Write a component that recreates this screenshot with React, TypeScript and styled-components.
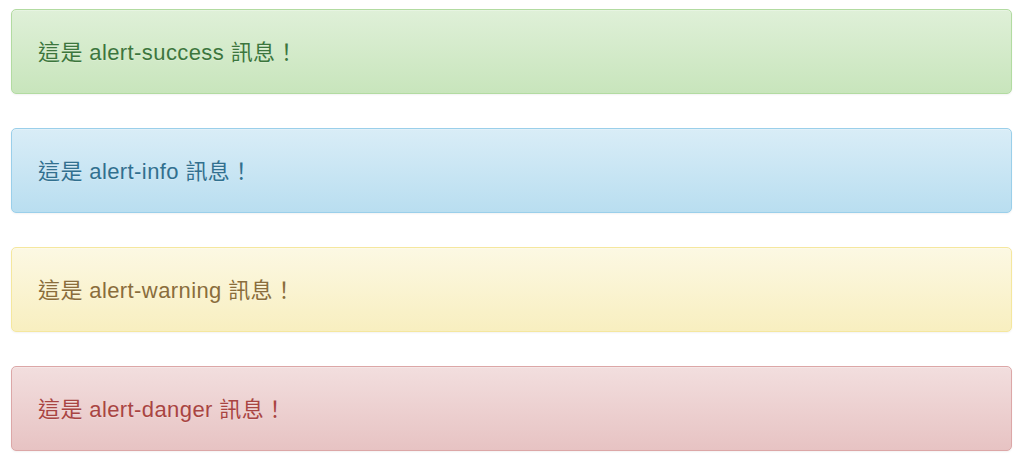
import styled, { createGlobalStyle } from 'styled-components'

const GlobalStyle = createGlobalStyle`
  body {
    margin: 0;
    background: #fff;
    font-family: "Liberation Sans", Arial, "Noto Sans CJK TC", sans-serif;
  }
`

type Kind = 'success' | 'info' | 'warning' | 'danger'

const palette: Record<Kind, { from: string; to: string; border: string; color: string }> = {
  success: { from: '#dff0d8', to: '#c8e5bc', border: '#b2dba1', color: '#3c763d' },
  info: { from: '#d9edf7', to: '#b9def0', border: '#9acfea', color: '#31708f' },
  warning: { from: '#fcf8e3', to: '#f8efc0', border: '#f5e79e', color: '#8a6d3b' },
  danger: { from: '#f2dede', to: '#e7c3c3', border: '#dca7a7', color: '#a94442' },
}

const Container = styled.div`
  display: flex;
  flex-direction: column;
  gap: 34px;
  padding: 9px 11px;
`

const Alert = styled.div<{ $kind: Kind }>`
  height: 85px;
  box-sizing: border-box;
  display: flex;
  align-items: center;
  padding: 0 26px 3px;
  border: 1px solid ${p => palette[p.$kind].border};
  border-radius: 5px;
  background-image: linear-gradient(to bottom, ${p => palette[p.$kind].from} 0%, ${p => palette[p.$kind].to} 100%);
  box-shadow: inset 0 1px 0 rgba(255, 255, 255, 0.25), 0 1px 2px rgba(0, 0, 0, 0.05);
  color: ${p => palette[p.$kind].color};
  text-shadow: 0 1px 0 rgba(255, 255, 255, 0.2);
  font-size: 22px;
  letter-spacing: 0.4px;
`

const kinds: Kind[] = ['success', 'info', 'warning', 'danger']

export default function App() {
  return (
    <>
      <GlobalStyle />
      <Container>
        {kinds.map(k => (
          <Alert key={k} $kind={k}>這是 alert-{k} 訊息！</Alert>
        ))}
      </Container>
    </>
  )
}
